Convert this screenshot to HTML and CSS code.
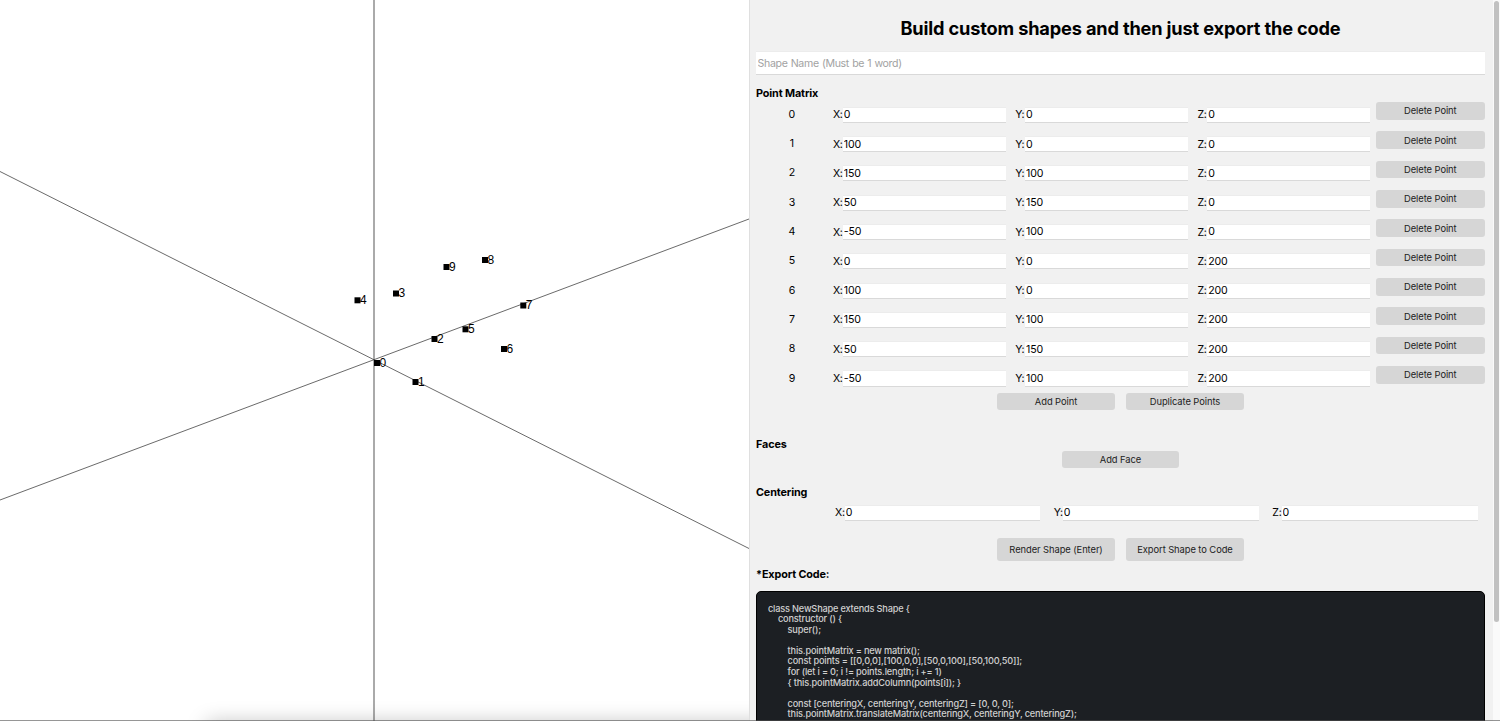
FILE: index.html
```html
<!DOCTYPE html>
<html lang="en">
<head>
<meta charset="utf-8">
<title>Shape Builder</title>
<link rel="stylesheet" href="styles.css">
</head>
<body>
<main class="app">
  <section class="viewport">
    <svg class="scene" width="749" height="721" viewBox="0 0 749 721">
      <g class="axes">
        <path d="M374 0V721" class="axis-y"/>
        <path d="M0 171.5L749 548.5"/>
        <path d="M0 500L749 219"/>
      </g>
      <g id="points"></g>
    </svg>
    <div class="dock-shadow"></div>
  </section>
  <section class="panel">
    <h1 class="title"><span>Build custom shapes and then just export the code</span></h1>
    <input class="name" placeholder="Shape Name (Must be 1 word)">
    <h2 class="label label-matrix">Point Matrix</h2>
    <div class="matrix" id="matrix"></div>
    <div class="buttons"><button>Add Point</button><button>Duplicate Points</button></div>
    <h2 class="label label-faces">Faces</h2>
    <div class="buttons"><button>Add Face</button></div>
    <h2 class="label label-centering">Centering</h2>
    <div class="centering">
      <label class="field">X:<input value="0"></label>
      <label class="field">Y:<input value="0"></label>
      <label class="field">Z:<input value="0"></label>
    </div>
    <div class="buttons actions"><button>Render Shape (Enter)</button><button>Export Shape to Code</button></div>
    <h2 class="label label-export">*Export Code:</h2>
    <pre class="code">class NewShape extends Shape {
<span class="i1">constructor () {</span>
<span class="i2">super();</span>

<span class="i2">this.pointMatrix = new matrix();</span>
<span class="i2">const points = [[0,0,0],[100,0,0],[50,0,100],[50,100,50]];</span>
<span class="i2">for (let i = 0; i != points.length; i += 1)</span>
<span class="i2">{ this.pointMatrix.addColumn(points[i]); }</span>

<span class="i2">const [centeringX, centeringY, centeringZ] = [0, 0, 0];</span>
<span class="i2">this.pointMatrix.translateMatrix(centeringX, centeringY, centeringZ);</span>
</pre>
  </section>
  <div class="scrollbar"><div class="thumb"></div></div>
</main>
<div class="window-edge"></div>
<script src="app.js"></script>
</body>
</html>
```
FILE: styles.css
```css
* { box-sizing: border-box; }
body { margin: 0; height: 721px; overflow: hidden; background: #fff; color: #000; font-family: Inter, "Liberation Sans", sans-serif; }
.app { display: flex; height: 721px; overflow: hidden; }
.viewport { width: 749px; flex: none; position: relative; overflow: hidden; background: #fff; }
.scene { display: block; font: 12px "Liberation Sans", sans-serif; }
.axes path { stroke: #444; stroke-width: .8; fill: none; }
.axes .axis-y { stroke: #aaa; stroke-width: 2; }
.dock-shadow { position: absolute; left: 205px; right: -40px; bottom: -17px; height: 16px; border-radius: 8px; box-shadow: 0 0 20px rgba(0,0,0,.25); }
.window-edge { position: absolute; left: 0; bottom: 0; width: 1500px; height: 1px; background: rgba(80,80,80,.6); }
.panel { width: 744px; flex: none; padding: 0 8px 0 6px; height: 721px; overflow: hidden; background: #f1f1f1; border-left: 1px solid #dfdfdf; }
.title { margin: 0; height: 52px; padding-top: 17px; line-height: 23px; text-align: center; font-size: 18.2px; font-weight: 700; letter-spacing: -.16px; white-space: nowrap; }
input { display: block; border: 0; border-radius: 0; background: #fff; outline: 0; font-family: inherit; color: #000; padding: 0 0 0 1px; min-width: 0; box-shadow: 0 1px 0 #d9d9d9, 0 -1px 0 #ececec; }
.name { width: 100%; height: 22px; padding-top: 1px; padding-left: 1.5px; font-size: 10.6px; letter-spacing: -.33px; word-spacing: .5px; }
.name::placeholder { color: #a2a2a2; opacity: 1; }
.label { position: relative; margin: 0; font-size: 10.8px; font-weight: 700; line-height: 16px; letter-spacing: -.12px; }
.label-matrix { margin-top: 12px; height: 14px; }
.matrix { height: 290.5px; margin-top: 2px; }
.row { display: grid; grid-template-columns: 10% 25% 25% 25% 15%; height: 29.33px; align-items: start; font-size: 10.6px; }
.index { text-align: center; line-height: 14px; padding-top: 5.8px; padding-right: 1px; }
.field { display: flex; align-items: center; font-size: 10.6px; letter-spacing: -.25px; line-height: 15px; }
.field input { margin-left: auto; height: 14.3px; font-size: 10.6px; letter-spacing: -.2px; }
.row .field { padding: 5.2px 5.3px 0 4px; }
.row .field input { width: 163px; }
button { display: block; height: 17.6px; padding: 0; border: 0; border-radius: 3px; background: #d6d6d6; color: #222; font: 9.4px Inter, "Liberation Sans", sans-serif; letter-spacing: -.08px; }
.buttons { display: flex; justify-content: center; gap: 11.7px; }
.buttons button { width: 117.3px; }
.label-faces { margin-top: 27px; height: 13.5px; }
.label-centering { margin-top: 16.5px; height: 14px; }
.centering { display: grid; grid-template-columns: repeat(3, 30%); justify-content: end; margin-top: 6.5px; height: 32.5px; align-items: start; }
.centering .field { padding: 0 7.5px 0 6px; }
.centering .field input { width: 196.3px; }
.actions button { height: 23.3px; }
.label-export { margin-top: 6px; height: 14px; }
.code { margin: 9.7px 0 0; height: 160px; padding: 12px 11px; border: 1px solid #000; border-radius: 5px; background: #1c1f23; color: #d0d0d0; font: 500 9.2px/10.55px Inter, "Liberation Sans", sans-serif; letter-spacing: -.18px; }
.i1 { padding-left: 10px; }
.i2 { padding-left: 19.6px; }
.scrollbar { flex: 1; background: #fafafa; padding: 1px 1px 0; }
.thumb { height: 621px; width: 5px; border-radius: 3px; background: #c1c1c1; }
```
FILE: app.js
```js
const points = [
  [0, 0, 0], [100, 0, 0], [150, 100, 0], [50, 150, 0], [-50, 100, 0],
  [0, 0, 200], [100, 0, 200], [150, 100, 200], [50, 150, 200], [-50, 100, 200]
];
const projected = [
  [377, 363], [415.5, 382], [434.5, 339], [396, 293.5], [357.5, 300.3],
  [465.5, 329.3], [504, 349], [523.3, 305.5], [485, 260], [446.5, 267]
];

// One editable row per point.
document.getElementById('matrix').innerHTML = points.map((p, i) =>
  `<div class="row"><span class="index">${i}</span>` +
  ['X', 'Y', 'Z'].map((axis, k) => `<label class="field">${axis}:<input value="${p[k]}"></label>`).join('') +
  '<button>Delete Point</button></div>').join('');

// Vertex markers with their indices.
document.getElementById('points').innerHTML = projected.map(([x, y], i) =>
  `<rect x="${x - 3}" y="${y - 3}" width="6" height="6"/><text x="${x + 2.5}" y="${y + 3.5}">${i}</text>`).join('');
```
